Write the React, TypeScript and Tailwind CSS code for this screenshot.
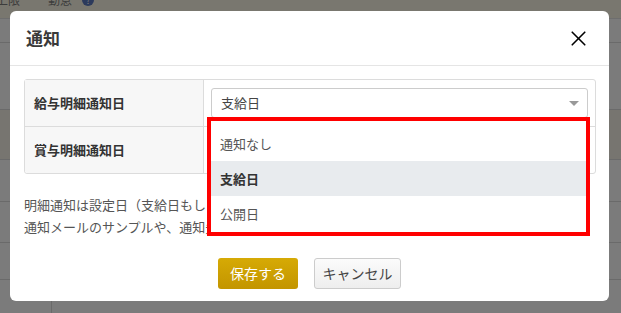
import { X } from "lucide-react";

const font = { fontFamily: '"Noto Sans CJK JP", "Noto Sans", sans-serif' };

function Backdrop() {
  return (
    <div className="flex h-full flex-col bg-[#7b7b7b]">
      <div className="flex h-[19px] items-end gap-6 border-b border-[#6e6e6e] bg-[#79776f] pb-[12px] text-[12px] leading-none text-[#3c3c3c]">
        <span className="-ml-[4px]">上限</span>
        <span className="ml-[4px]">勤怠</span>
        <span className="-ml-[14px] flex h-[12px] w-[12px] items-center justify-center rounded-full bg-[#2c3a5c] text-[9px] text-[#7b7b7b]">?</span>
      </div>
      <div className="h-[24px] border-b border-[#6a6a6a]" />
      <div className="h-[67px] border-b border-[#6a6a6a]" />
      <div className="h-[50px] border-b border-[#6a6a6a] bg-[#777570]" />
      <div className="h-[42px] border-b border-[#6a6a6a]" />
      <div className="h-[41px] border-b border-[#6a6a6a]" />
      <div className="h-[37px] border-b border-[#6a6a6a]" />
      <div className="flex flex-1">
        <div className="w-[52px] border-r border-[#6a6a6a]" />
      </div>
    </div>
  );
}

function Dropdown() {
  const options = ["通知なし", "支給日", "公開日"];
  return (
    <div className="absolute left-[-4px] top-[29px] z-10 w-[383px] border-[4px] border-[#ff0000] bg-white pt-[5px] pb-[1px]">
      {options.map((opt) => (
        <div
          key={opt}
          className={
            opt === "支給日"
              ? "flex h-[35px] items-center bg-[#e8ebee] pl-[9px] text-[13px] font-bold text-[#333]"
              : "flex h-[35px] items-center pl-[9px] text-[13px] text-[#555]"
          }
        >
          {opt}
        </div>
      ))}
    </div>
  );
}

function Modal() {
  return (
    <div className="absolute left-[10px] top-[11px] flex h-[290px] w-[599px] flex-col rounded-[6px] bg-white">
      <div className="flex h-[55px] items-center justify-between border-b border-[#e5e5e5] pl-[16px] pr-[18px]">
        <h3 className="text-[17px] font-bold text-[#3a3a3a]">通知</h3>
        <X className="h-[25px] w-[25px] text-black" strokeWidth={1.6} />
      </div>
      <div className="flex flex-col px-[14px] pr-[13px] pt-[13px]">
        <div className="flex flex-col rounded-[3px] border border-[#dcdcdc]">
          <div className="flex h-[47px] border-b border-[#dcdcdc]">
            <div className="flex w-[179px] items-center border-r border-[#dcdcdc] bg-[#f7f7f7] pl-[9px] text-[13px] font-bold text-[#333]">
              給与明細通知日
            </div>
            <div className="flex flex-1 items-center px-[7px]">
              <div className="relative w-full">
                <div className="flex h-[30px] w-full items-center justify-between rounded-[3px] border border-[#ccc] bg-white pl-[9px] pr-[8px] text-[13px] text-[#444]">
                  <span>支給日</span>
                  <span className="h-0 w-0 border-x-[5px] border-t-[5px] border-x-transparent border-t-[#999]" />
                </div>
                <Dropdown />
              </div>
            </div>
          </div>
          <div className="flex h-[46px]">
            <div className="flex w-[179px] items-center rounded-bl-[3px] border-r border-[#dcdcdc] bg-[#f7f7f7] pl-[9px] text-[13px] font-bold text-[#333]">
              賞与明細通知日
            </div>
            <div className="flex-1" />
          </div>
        </div>
        <div className="mt-[20px] whitespace-nowrap text-[13px] leading-[22px] text-[#555]">
          <p>明細通知は設定日（支給日もしくは公開日）に送信されます。</p>
          <p>通知メールのサンプルや、通知先の設定はヘルプをご覧ください。</p>
        </div>
      </div>
      <div className="mt-[20px] flex justify-center gap-[16px]">
        <button className="flex h-[31px] w-[80px] items-center justify-center rounded-[3px] bg-gradient-to-b from-[#d6aa05] to-[#c39500] text-[14px] text-white">
          保存する
        </button>
        <button className="flex h-[31px] w-[87px] items-center justify-center rounded-[3px] border border-[#ccc] bg-gradient-to-b from-[#fbfbfb] to-[#eeeeee] text-[14px] text-[#444]">
          キャンセル
        </button>
      </div>
    </div>
  );
}

export default function App() {
  return (
    <div className="relative h-[313px] w-[621px] overflow-hidden" style={font}>
      <Backdrop />
      <Modal />
    </div>
  );
}
